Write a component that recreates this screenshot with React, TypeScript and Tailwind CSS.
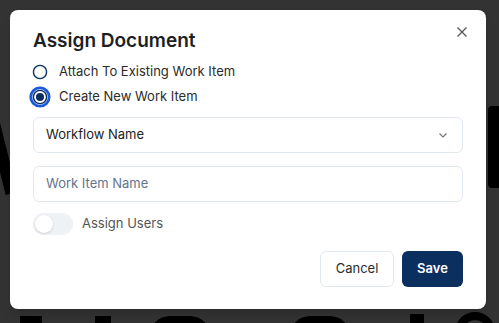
import React, { useState } from "react";

function Radio({ checked }: { checked: boolean }) {
  return (
    <svg width="22" height="22" viewBox="0 0 22 22" className="shrink-0 -ml-[4px]">
      {checked && <circle cx="11" cy="11" r="9.2" fill="none" stroke="#1d5bd8" strokeWidth="2.8" />}
      <circle cx="11" cy="11" r="6.6" fill="#fff" stroke="#0b2f5e" strokeWidth="1.4" />
      {checked && <circle cx="11" cy="11" r="4" fill="#0b2f5e" />}
    </svg>
  );
}

export default function App() {
  const [mode, setMode] = useState("create");
  const [assign, setAssign] = useState(false);

  return (
    <div className="relative w-[499px] h-[323px] overflow-hidden bg-white" style={{ fontFamily: "Inter, 'Noto Sans', sans-serif" }}>
      {/* page underneath the overlay */}
      <div className="absolute left-[-6px] top-[100px] w-[12px] h-[95px] bg-black -rotate-[14deg]"></div>
      <div className="absolute left-[488px] top-[106px] w-[30px] h-[82px] rounded bg-black"></div>
      <div className="absolute left-[20px] top-[316px] w-[22px] h-[20px] bg-black"></div>
      <div className="absolute left-[95px] top-[316px] w-[16px] h-[20px] bg-black"></div>
      <div className="absolute left-[150px] top-[316px] w-[60px] h-[40px] rounded-full bg-black"></div>
      <div className="absolute left-[290px] top-[316px] w-[60px] h-[40px] rounded-full bg-black"></div>
      <div className="absolute left-[410px] top-[314px] w-[14px] h-[20px] bg-black"></div>
      <div className="absolute left-[455px] top-[312px] w-[40px] h-[40px] rounded-full border-[8px] border-black"></div>

      <div className="absolute inset-0 bg-black/80"></div>

      {/* dialog */}
      <div className="absolute left-[10px] top-[10px] w-[476px] h-[299px] rounded-lg bg-white px-[23px] pt-[17px] shadow-lg">
        <button className="absolute right-[18px] top-[16px] text-[#555]">
          <svg width="12" height="12" viewBox="0 0 12 12" fill="none" stroke="currentColor" strokeWidth="1.3">
            <path d="M1.5 1.5l9 9M10.5 1.5l-9 9" />
          </svg>
        </button>

        <h2 className="text-[19px] leading-[28px] font-semibold text-[#1f1f1f]">Assign Document</h2>

        <div className="mt-[5px] flex flex-col">
          <label className="flex items-center gap-[8px] h-[24px] cursor-pointer" onClick={() => setMode("attach")}>
            <Radio checked={mode === "attach"} />
            <span className="text-[13px] text-[#2b2b2b]">Attach To Existing Work Item</span>
          </label>
          <label className="flex items-center gap-[8px] h-[24px] mt-[1px] cursor-pointer" onClick={() => setMode("create")}>
            <Radio checked={mode === "create"} />
            <span className="text-[13px] text-[#2b2b2b]">Create New Work Item</span>
          </label>
        </div>

        <div className="mt-[8px] h-[36px] rounded-md border border-[#e2e8f0] flex items-center justify-between pl-[12px] pr-[13px]">
          <span className="text-[13px] text-[#222]">Workflow Name</span>
          <svg width="12" height="12" viewBox="0 0 12 12" fill="none" stroke="#777" strokeWidth="1.2">
            <path d="M2.5 4.5L6 8l3.5-3.5" />
          </svg>
        </div>

        <div className="mt-[13px] h-[36px] rounded-md border border-[#e2e8f0] flex items-center pl-[12px]">
          <input placeholder="Work Item Name" className="w-full outline-none text-[13px] text-[#222] placeholder:text-[#64748b] bg-transparent" />
        </div>

        <div className="mt-[11px] flex items-center gap-[9px] h-[22px]">
          <button
            onClick={() => setAssign(!assign)}
            className={assign ? "w-[40px] h-[22px] rounded-full bg-[#0b2f5e] p-[2px] flex justify-end" : "w-[40px] h-[22px] rounded-full bg-[#eef1f5] p-[2px] flex justify-start"}
          >
            <span className="w-[18px] h-[18px] rounded-full bg-white shadow-sm"></span>
          </button>
          <span className="text-[13px] text-[#555]">Assign Users</span>
        </div>

        <div className="mt-[16px] flex justify-end gap-[8px]">
          <button className="h-[36px] w-[74px] rounded-md border border-[#e2e8f0] bg-white text-[13px] text-[#2b2b2b]">Cancel</button>
          <button className="h-[36px] w-[61px] rounded-md bg-[#0b2f5e] text-[13px] font-semibold text-white">Save</button>
        </div>
      </div>
    </div>
  );
}
